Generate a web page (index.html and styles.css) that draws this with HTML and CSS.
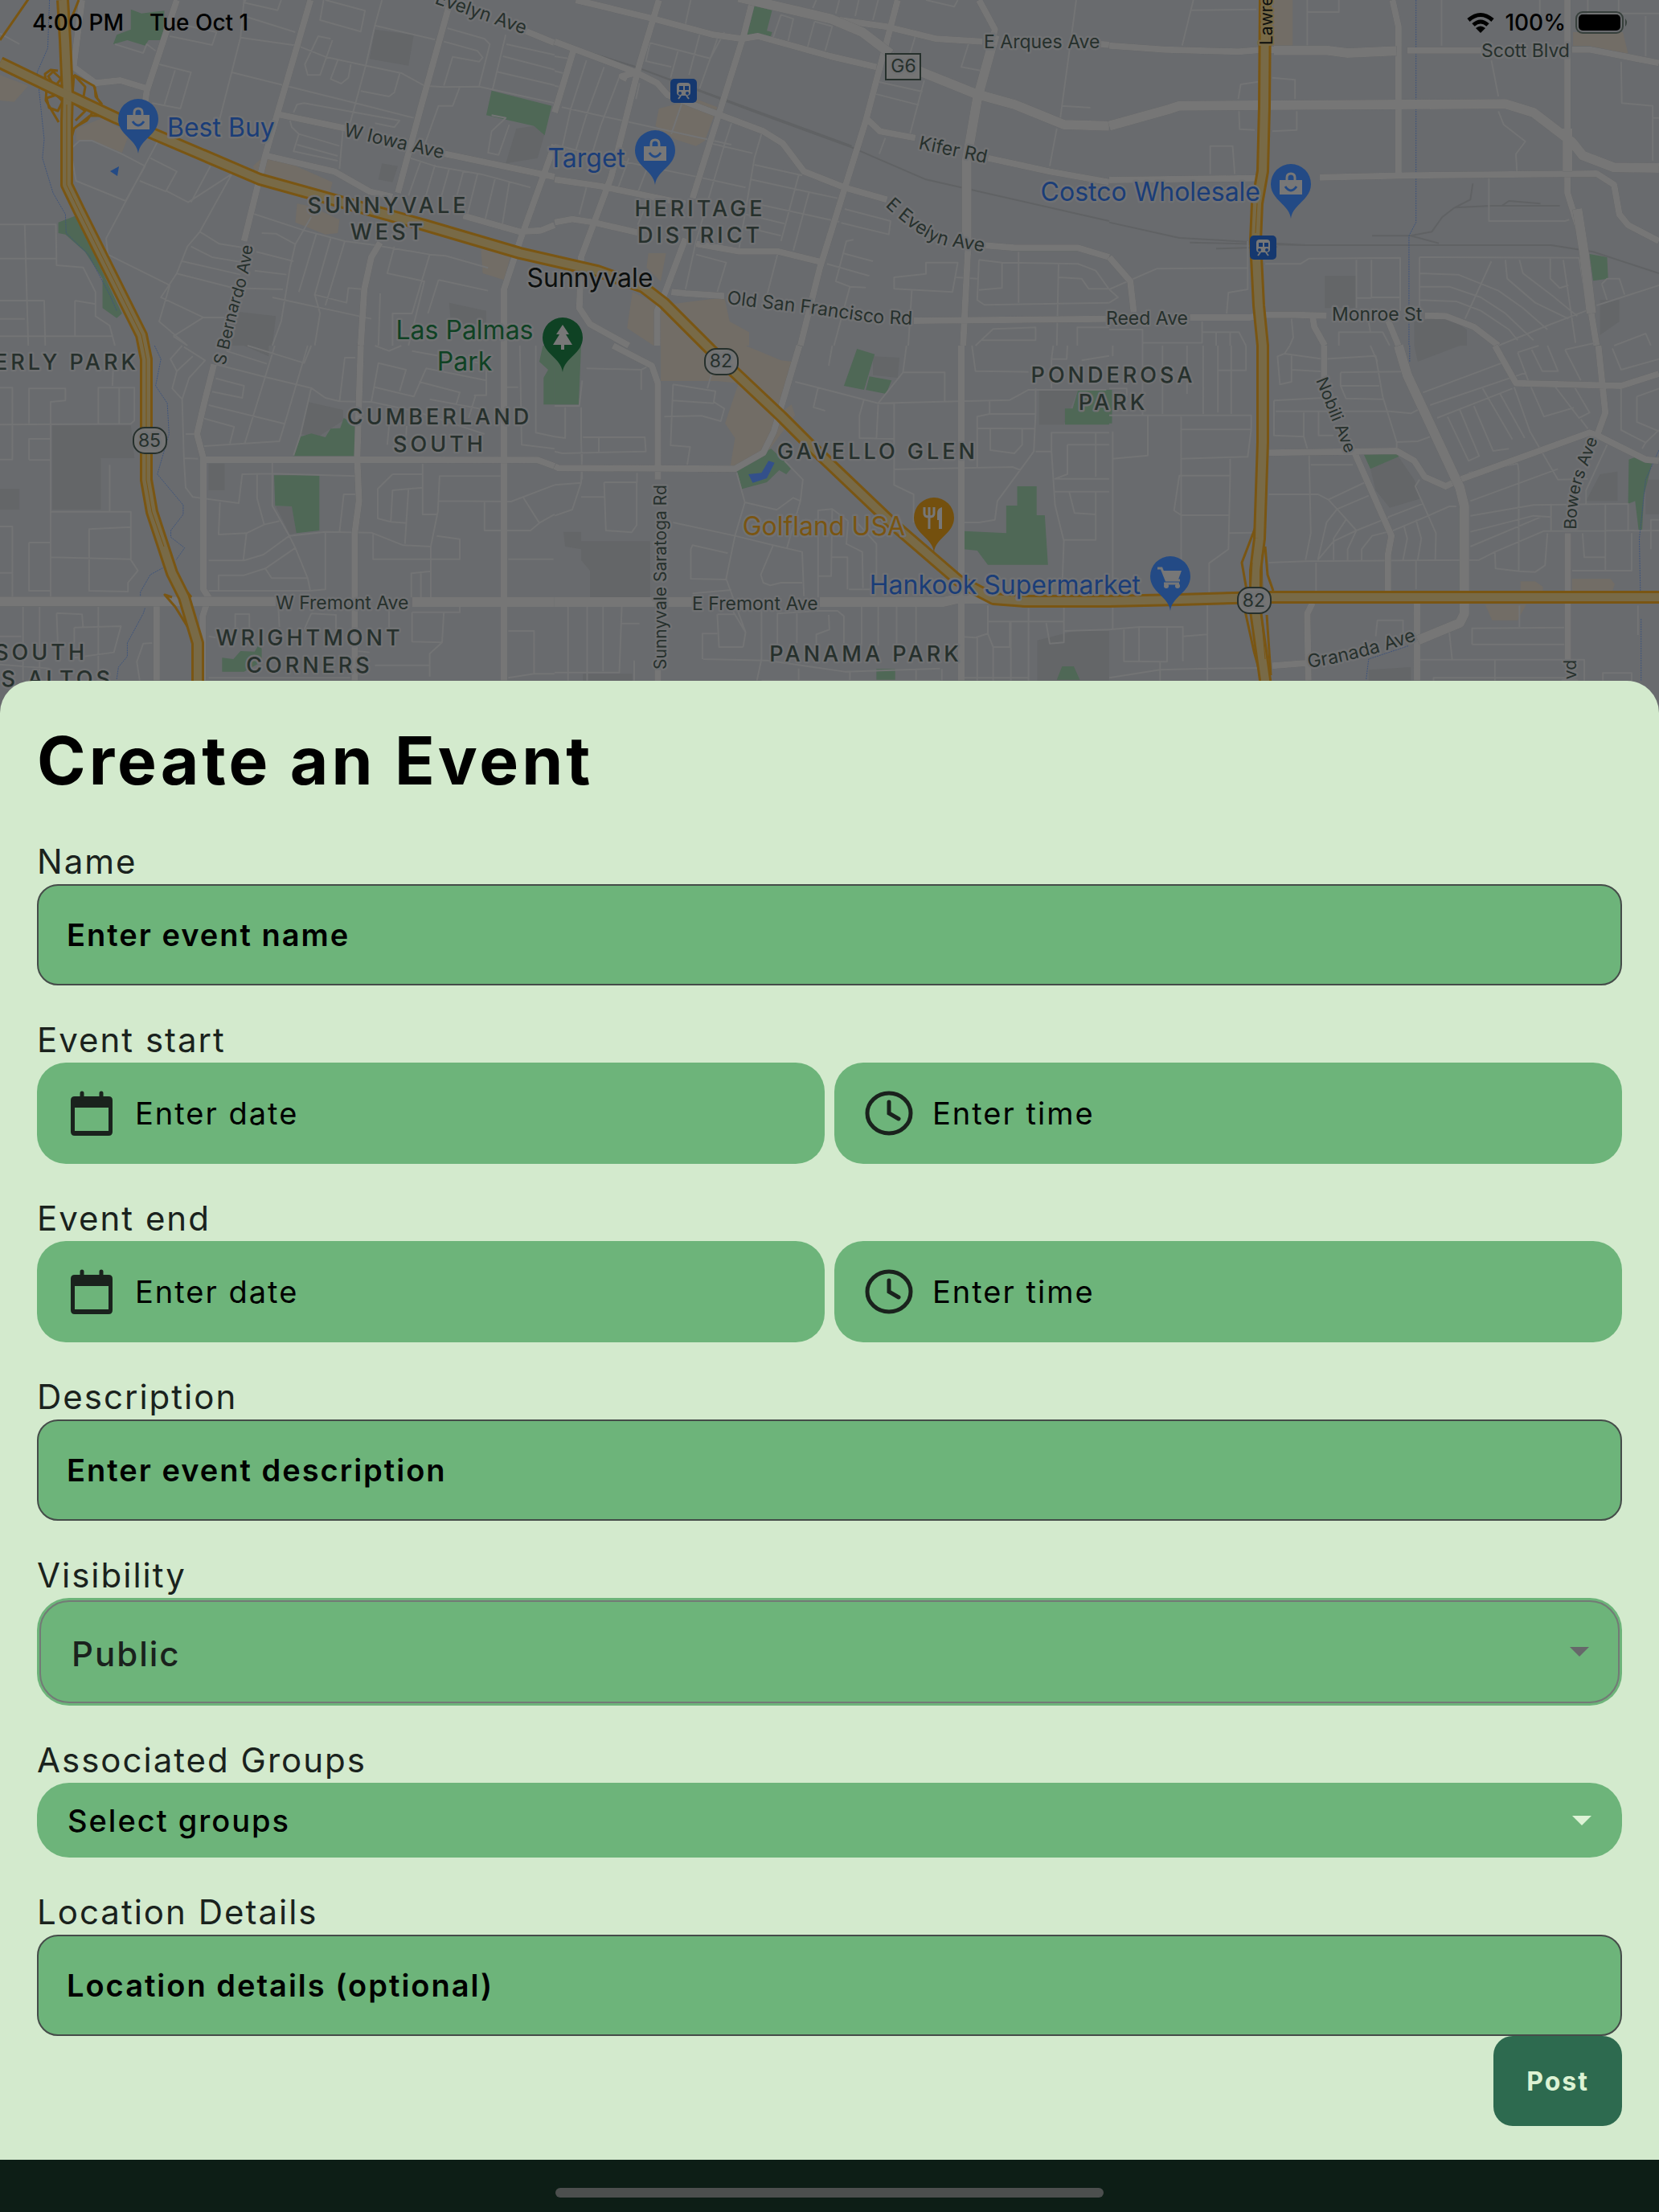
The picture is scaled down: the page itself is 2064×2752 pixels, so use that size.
FILE: index.html
```html
<!DOCTYPE html>
<html lang="en">
<head>
<meta charset="utf-8">
<meta name="viewport" content="width=device-width, initial-scale=1">
<title>Create an Event</title>
<link rel="stylesheet" href="styles.css">
</head>
<body>
<section class="map-area" aria-label="Map of Sunnyvale">
  <svg class="map" viewBox="0 0 2064 887" preserveAspectRatio="xMidYMin slice" aria-hidden="true">
    <defs>
      <path id="pin" d="M0 68C-2 50-25 45-25 25A25 25 0 0 1 25 25C25 45 2 50 0 68Z"/>
      <g id="bag"><path fill="#777" d="M-14 20H14V38H-14Z"/><path fill="none" stroke="#777" stroke-width="3" d="M-5 21V17Q-5 12 0 12Q5 12 5 17V21"/><path fill="none" stroke="#234a85" stroke-width="3" d="M-7 28Q0 38 7 28"/></g>
      <g id="train"><rect width="33" height="30" rx="5" fill="#15386f"/><rect x="8" y="5" width="17" height="16" rx="4" fill="#777"/><path fill="#15386f" d="M11 9h5v5h-5zM18 9h5v5h-5z"/><circle cx="12" cy="18" r="2" fill="#15386f"/><circle cx="21" cy="18" r="2" fill="#15386f"/><path stroke="#777" stroke-width="2" d="M13 21l-3 4M20 21l3 4"/></g>
      <path id="lbl-bernardo" d="M280 455L296 385Q314 335 316 285"/>
      <path id="lbl-eevelyn" d="M1101 256Q1150 302 1180 306T1240 317"/>
      <path id="lbl-oldsf" d="M904 378L1007 390L1090 402L1160 405"/>
      <path id="lbl-bowers" d="M1961 659Q1961 620 1970 595T1994 530"/>
      <path id="lbl-granada" d="M1628 831Q1700 820 1775 792"/>
    </defs>
    <rect width="2064" height="887" fill="#696b6e"/>

    <!-- land use, local streets and avenues, tile by tile -->
    <g transform="matrix(.44 0 0 .3333 0 0)">
      <path class="school" d="M1060 110L1170 130L1155 245L1045 220ZM1460 480L1510 470L1540 500L1520 590L1430 610ZM1080 610L1125 620L1110 680L1070 670ZM650 1160L780 1180L770 1290H640ZM1270 1130L1375 1160V1210H1275Z"/>
      <path class="shops" d="M0 280L80 320L40 380L0 375ZM215 480L290 440L365 500L345 570L260 525L215 525ZM715 620L740 590L820 610L940 680L930 735L730 670ZM840 760L880 770L960 820L955 870L920 875L835 830ZM1360 930L1445 950L1425 1045L1365 1020Z"/>
      <path class="park" d="M370 35L400 50L465 40L460 150L420 150L410 170L360 150L320 165L330 130L370 110ZM1390 338L1560 395L1540 505L1510 470L1375 430ZM165 870V830L215 805L345 1170L330 1187L290 1150V1040L240 940L185 875Z"/>
      <path class="minor" d="M480 135L600 168L612 120L490 85M440 190L415 165L405 198L325 165M0 125L55 165M695 0L690 10L785 38L795 0M915 0L905 75L1020 118L1032 40L920 0M1080 0L1060 95L1230 148M690 60L835 120M690 0L680 140L840 170L920 212L1035 245L1135 273L1200 320L1255 325L1355 323L1568 385M680 140L655 270L620 450M655 270L1005 385L1170 440M940 150L905 280L870 280L862 240L900 135L935 145M955 225L935 295L965 312L985 290L992 240M1060 95L1035 240L990 460M1130 275L1115 345L1100 360L1020 340M450 240L540 270L510 405L430 385M495 262L465 390M1265 105L1370 145L1385 165L1355 320M1255 155L1350 190L1365 215L1355 230L1280 212L1255 320M1430 130L1392 338M1432 165L1568 205M1422 210L1568 260M1405 268L1568 318M830 420L840 390L860 385L1130 450L1115 475L1060 460M820 450L825 475L845 500L960 545M845 500L830 565L955 600M840 540L955 582M970 480L960 630M1300 325L1280 395H1240L1190 580M1390 430L1430 440L1390 490L1380 570L1410 578L1440 465M1160 590L1230 620L1360 650L1500 700M1190 600L1155 730M1230 615L1200 750M1270 630L1240 770M1310 640L1280 790M1350 650L1320 810M1400 665L1370 830M1440 680L1420 840M205 550L225 525L260 525L345 575L410 620L355 750L215 675L205 600M445 530L300 890L305 950L480 1065L450 1200L530 1290M425 590L500 640L470 712L532 755L655 650L565 865L530 920L500 1020L455 1110L575 1185L635 1185M395 675L470 715M595 620L540 755M565 865L620 910L690 925M540 920L600 960L690 980M515 975L680 1025M497 1020L660 1075L800 1080M710 795L860 860L975 900L1060 915L1215 950L1260 955L1380 1000M740 870L780 872L835 912L820 1000L795 1200L770 1290M880 810L835 912M895 870L845 1090M935 890L890 1100L905 1170L890 1290M725 940L830 975M720 1010L810 1025M975 900L920 1140M1115 920L1095 1020L1200 1050L1155 1290M1215 950L1165 1170H1110V1290M1240 1045L1380 1085M1240 1045L1210 1170M1075 1095L1070 1290M1030 1080L985 1075L980 1130L890 1100M770 1110L1050 1190M0 838H158L160 990L235 998L270 1090V1180L310 1215L325 1290M70 840L80 1290M0 965H160M0 1122H125L128 1290M212 1122L270 1135M212 1122V1255M0 1255H320M490 1255L575 1185M490 1255L530 1290M0 1190H70"/>
      <path class="creek" d="M140 0L135 180L105 270L125 520L120 590L150 720L185 800L187 870L250 950L310 1100L330 1160"/>
      <path class="major" d="M232 0L208 250L270 310L340 300L415 330M500 0L415 340L410 385M878 0L750 580L690 900M1270 20L1190 400L1125 720M1075 905L1050 960L1030 1080L1020 1290M1568 540L1470 900L1425 1080L1425 1290M780 425L980 480M1250 572L1568 660M750 580L945 640L1045 715L1110 735M1310 805L1470 865L1530 860L1568 840M1485 115L1568 160"/>
    </g>
    <g transform="matrix(.44 0 0 .3333 690 0)">
      <path class="shops" d="M295 405L355 385L400 370L460 400L425 525L400 545L340 520L285 470ZM265 945L315 945L300 1050L260 1000ZM220 1090L300 1140L480 1110L495 1200L550 1240V1290H280L205 1225Z"/>
      <path class="park" d="M560 20L615 38L600 115L615 120L610 142L542 130ZM0 1190H35V1290H0Z"/>
      <path class="rail" d="M0 155L230 250L560 415L840 550L1050 670L1568 825M230 250L840 545"/>
      <path class="minor" d="M385 0L370 90M740 0L730 30M805 0L795 50M860 0L850 60M915 0L900 75M1050 0L1130 25L1140 0M1475 0L1430 440M1435 395L1515 402M270 160L440 218L480 120M270 160L258 228L330 250M350 185L328 290M410 130L380 280M460 145L410 330M640 55L675 70L660 155M640 55L618 140M735 80L785 98L765 190M735 80L715 178M1170 165L1150 250L1210 265M1020 135L1005 200M915 305L1040 342M905 350L1030 392M1045 300L1005 500M935 515L918 575M1420 480L1400 620M0 210L45 220M0 265L40 278M0 320L30 328M90 225L45 410L20 560M140 250L90 430L60 560M185 280L130 470L100 600M20 400L500 540M0 540L150 590L420 665L540 700M360 385L330 500M500 460L480 540L400 900M585 500L565 590L520 940M440 535L560 572M565 615L700 655M555 670L800 740M690 655L640 900M720 715L675 935M550 755L805 828M540 800L650 835M530 845L640 880M820 780L950 825L945 875L810 832M90 700L70 800M270 600L235 720M210 590L180 700M235 840L260 760M845 895L825 900L795 1050L835 1070L880 1073M815 945L900 975M770 985L890 1030M400 950L485 980L460 1090M400 900L370 1080M630 950L600 1105M835 1070L790 1290M1050 980H1140L1125 1090L960 1078V1035L1050 1022ZM1135 1035L1195 1040M1010 1085L1000 1290M1200 970L1265 980L1480 985L1530 1010L1568 1080M1265 980V1075L1200 1082M1200 970L1195 1120L1215 1138L1568 1130M1312 940V1130M1425 985L1420 1290M1425 1035L1490 1040L1510 1078H1568M1190 1290L1240 1228L1360 1222V1270H1210M1478 1290V1222H1568M240 310L230 370"/>
      <path class="major" d="M60 0L280 70L450 130L530 145L575 135L780 210L910 250M295 0L240 240L160 660L75 960L70 1150L100 1210L210 1290M0 155L230 270L290 310L320 355L430 410L590 490L645 535L705 640L820 700L940 745M560 0L535 130L390 740M370 890L310 1100L290 1160V1290M970 0L880 450L750 1000L695 1290M780 70L940 100L1080 145L1210 155M1545 165L1568 167M1200 0L1245 110L1195 370L1165 600L1170 900L1155 1290M880 440L920 490L1020 515M1225 590L1400 640L1568 680M1210 915L1300 925H1480L1568 960M0 670L130 695L370 760M0 830L50 818L110 830L240 870M400 910L520 938H630L760 980M330 1090L370 1095L480 1105M1015 1197L1568 1190M55 180L0 420M235 270L190 285L205 295"/>
      <path class="major wide" d="M520 -10L780 70L870 120L950 200M950 210L1040 270L1190 350L1300 390L1440 465L1568 470M1245 130L1195 370L1165 600L1165 900"/>
    </g>
    <g transform="matrix(.4362 0 0 .3333 1380 0)">
      <path class="school" d="M615 1030H705V1150H615ZM870 1200L960 1180L1020 1230V1290H870ZM1400 1120H1455V1200L1400 1250Z"/>
      <path class="shops" d="M470 0H523V170H470ZM1323 120H1465L1480 200L1370 172H1323Z"/>
      <path class="park" d="M1370 948L1420 960L1423 1040L1380 1048Z"/>
      <path class="rail" d="M0 830L200 888L560 915L1260 915L1380 940L1568 1020M230 905L560 915M750 880H860L940 908M860 880L920 865L950 810L985 775L1030 745L1037 685M985 775L1090 768H1285M1120 768L1140 750L1230 760M305 928L480 922"/>
      <path class="minor" d="M240 0L208 170M235 38L420 35M565 0V170M565 45H655V0M948 0V170M1228 0V60M1365 0V50H1568M1453 0V60M1530 60V210M1460 230L1462 385L1550 395V600M1550 440H1568M1090 225L1110 360M465 290L530 298V370M425 305L375 315L368 370M535 415V485L465 490M370 415L372 482L415 485M288 650V545H352L358 650M1110 415L1125 465L1187 528L1160 575L1163 640M1083 665V825H1300L1312 820M0 1080L135 1003L395 1000M445 985H545L570 965L830 962V1160M705 970V1150M748 970V1110H830M705 1112H748M395 900V1080L340 1092L335 1170M885 960L1340 962L1365 1160M885 960V1160M885 1020L995 1025L1110 1085L1180 1150L1250 1230M885 1070L970 1070L1060 1110L1130 1170L1210 1270M885 1120L990 1125L1060 1160L1140 1230L1165 1270M1090 975L1015 1190M1130 970L1135 1040L1215 1130L1310 1190M1170 970L1180 1020L1265 1105L1335 1180M1258 965V1040L1285 1075L1310 1065M1295 970L1330 1280M1110 1290L1250 1215L1360 1160M1390 1140L1568 1065M1405 1060L1420 1040H1455L1470 1100M1405 1060L1420 1120M1440 1290L1530 1245L1545 1290M0 1080L25 1110L0 1130M0 1230H95V1290M95 1280H265V1200M265 1240H370L390 1290M305 1240V1290M345 1240V1290M520 1190L525 1260L515 1290M655 1290V1240H780L800 1290M740 1200L745 1240"/>
      <path class="creek" d="M875 0V830L855 880V1290"/>
      <path class="major" d="M0 170L160 185L370 193L440 185L640 188M850 188L1062 188M1320 185H1370L1568 235M0 672L420 665M600 662L850 655L1390 648L1440 690L1455 800L1480 840L1568 900M808 0L825 100V655M1307 0V720L1350 900L1375 1170L1390 1290M230 1185H400L440 1175H530L620 1178M900 1178L960 1180L1040 1220L1110 1290M0 960L60 1050L70 1165M580 1180L585 1220L615 1290M795 1195L825 1290"/>
      <path class="major wide" d="M470 188L620 188L680 198L820 190M0 470L170 408L200 395L1130 388L1210 420L1320 530L1350 580L1440 625L1568 627M1307 480L1307 640M1335 780L1355 950L1375 1170"/>
    </g>
    <g transform="matrix(.44 0 0 .3333 0 430)">
      <path class="school" d="M148 298L370 298L380 420H285V612H148ZM0 535H55V612H0ZM590 440H635V540H590ZM870 210L970 240V280L900 340L850 330ZM780 600L825 600L838 700L820 705ZM690 0H760V40Z"/>
      <path class="park" d="M830 412L850 340L880 328L920 342L935 310L962 308L972 270L1005 295V412ZM775 484H903V690L838 700L825 600L778 598ZM628 1165L660 1170L680 1140L720 1142L730 1120L740 1130V1180L690 1217H628ZM1535 0H1568V220H1537V120L1550 90L1525 60Z"/>
      <path class="minor" d="M0 157H35V425H0M82 427V348H143V427H82M82 290V160H185V205L143 210V940M0 295L370 292L380 280V157H278V290M337 157V290M320 80L318 150M310 445V618M143 620H370V800L390 840L362 885V918L252 915V685L370 677M0 675H35V940M0 848H35M143 790L370 797M82 735H143M82 735V915H143M65 975V1250M112 975V1250M0 1085H60M160 998L232 1003L235 1050M160 998L165 1160M210 1052L342 1047L322 1145L210 1165V1052M278 975V1250M430 1110L405 1112L387 1180L395 1250M515 0L482 50L500 95L545 40M520 5L580 55L535 120L515 200L520 420L525 530L545 565L675 588L685 480L770 478L1005 487M525 330H555M520 420L560 422M500 95L487 160L515 200M610 70L752 118L880 158L920 195L960 208L1050 210L1175 245L1370 330M610 122L690 150L685 195L600 172M590 222L805 292L870 0M577 272L662 303L650 365M577 375L790 357L805 292M777 0L692 365M700 0L860 65L880 0M640 20L755 68M880 158L850 330L830 410M960 208L975 45H1005M1050 210L1070 65L1148 90L1130 170M1060 155L1170 190L1205 85L1375 130M1185 135L1300 175L1290 220M1215 200L1375 240M1345 185L1325 270M1060 0L1100 20L1135 0M1165 20L1375 70V185L1340 185M1100 300L1095 370M1150 300L1145 400M770 435V478V598L818 710L835 755L870 868L877 912M727 480V570L747 668L697 700L618 705L622 585M697 700L688 800M747 668L790 655M590 802H690L745 780L818 710L920 695L1050 698L1140 745L1218 750L1238 620L1243 487H1415M835 755L750 832L690 857H618V912M750 832L768 868H870M590 915H877L920 910V698M1005 555H972L960 695M1195 440V630H1238M1110 480L1068 535V645L1105 658L1150 662M1110 480H1195M1105 658L1110 540L1195 530M1155 535L1145 740M1055 700V797H1300V722L1235 710M1218 750V940M1163 940V850L1218 842M1190 850V940M1240 580L1445 582L1568 520M1480 568L1525 662L1568 630M1370 585V690H1500L1525 662M1437 797H1565M1430 155H1465M1470 0L1475 370L1568 385M1515 0V325L1568 340M665 1060V1002H705V1060M787 975L790 1050M880 1000L950 1005V1060M880 1000L860 1060M1165 995H1300V975M1255 995L1250 1108L1215 1150V1235M1165 995V1105L1250 1108M1100 975V1060M1060 1193H1215M1437 1065H1510V1225H1568M1437 1240L1510 1225M590 1085L610 1090M1010 1140L1045 1145M0 1190L140 1205M590 1240H990"/>
      <path class="creek" d="M437 0L455 50L440 150L473 215L478 330L445 480L518 595V630L483 690V715L522 755L498 800M460 830L425 855L397 920V940M410 980L405 1000L360 1110V1160L335 1200L330 1245"/>
      <path class="major" d="M605 70L580 200L557 330L575 420V910L590 940L573 1010V1250M1020 0L1010 420L1015 580L1003 700V1250M1425 0V1250M575 425L1520 427L1568 450M443 970V1250"/>
      <path class="major wide" d="M0 955H780M1165 957H1568"/>
    </g>
    <g transform="matrix(.44 0 0 .3333 690 430)">
      <path class="school" d="M900 40L975 45L970 120L900 110ZM25 695H75V730H270V940H100V840L75 800V760L30 750ZM1370 165H1480L1440 295H1370ZM1365 1100L1470 1065H1568V1250H1365ZM80 1225H220V1250H80Z"/>
      <path class="shops" d="M300 0H540L640 55L672 60L640 250L670 220L680 260L600 400L510 450H497L510 345L482 290L520 140L460 132H300Z"/>
      <path class="park" d="M0 0H75L68 220H0ZM855 12L905 32L875 165L818 150ZM890 115L953 130L937 180L880 165ZM515 465L590 400L612 385L650 430L668 460L655 480L635 465L600 510L530 535ZM1157 692L1277 700V597H1308V525H1363V633H1386L1395 818H1225L1195 765L1157 760ZM1480 165H1568V295H1443V235H1465ZM910 1207H963V1248H910ZM1435 1197H1468L1485 1247H1420Z"/>
      <path class="water" d="M548 480L585 475L605 430L622 437L600 495L560 512Z"/>
      <path class="minor" d="M90 85L245 90V165M245 90L260 80M0 225H70L78 130M30 230V345L0 340M75 230V345L78 500M80 342H255L258 395L22 402L0 395M125 345V398M335 145L455 170L450 210L480 235L470 282L415 262L310 265M335 145L328 372L383 378L375 445M335 205L450 215M445 100L432 160M775 75L785 0M680 135L745 157L915 215L1140 208L1287 203L1340 165H1560M745 157L732 230L765 243M915 215L985 100H1103V208M985 100L995 0M875 200L862 260V345L960 348M915 220L910 345M960 215V520L1015 555V660M1180 0L1190 95L1340 98M1410 0L1405 50H1448L1450 0M1405 50V160M1490 55L1568 38M1230 205V255H1360V160M1230 255L1195 265V455M1360 255L1355 395L1252 580L1245 650L1200 660H1157M1195 308L1360 310M1232 310V390L1300 402L1322 370V310M1360 395H1405V325H1568M1405 395L1415 595L1440 730L1435 900M1450 370H1568M1450 370V480L1415 497H1568M1415 545H1568M1530 325V490M1455 545L1470 625L1530 630V545M1440 725H1530V630M960 462L1295 453L1318 465M515 475L538 585L510 710L485 870L540 1070L533 1125M650 430L702 500L695 580L657 755M538 585L628 613L675 568L695 580M0 520L75 512L78 400M0 635L50 612L75 512M75 565H140M140 510H233V475M140 510L145 690L218 697L232 670V510M335 660L510 710L618 745L700 770L705 935M385 760L390 745L490 775M385 760V870L485 873M618 745L583 855L590 885L610 895L640 885H700M745 940V615L785 610L830 655M785 610L782 860H745M785 790H828V910M830 655L825 740L870 770L872 905M855 660L910 740V905M832 910H895M390 925L500 912M540 1070L490 960M460 1003H510M460 1003L465 1125H533M418 1170V1075H460M420 1170L600 1175L820 1217L1090 1205M630 1115V1000L750 990H800L818 1010V1110M585 975V1170L572 1250M685 1000V1110M775 1005L777 1060L740 1078V1115M868 975V1120M915 975V1120M967 975V1120M1022 975V1120M690 1205V1250M835 1215V1250M1022 1205V1250M1095 1207V1250M585 1250H1090M38 975V1250M92 975V1250M137 975V1215M190 975L183 1220H0M190 1037H240M225 1175V1250M1225 970V1075L1190 1090L1155 1087M1195 1090V1250M1225 1075L1240 1125H1287V1030M1240 1125V1250M1225 1030H1440V970M1440 1065L1568 1060M1340 980V1250M1290 1030V1250M1390 1035L1400 1112L1440 1108V1030M1157 1240H1340"/>
      <path class="major" d="M165 0L275 75L292 140V500M292 1210V1260M0 450L10 457L510 460L590 400L620 320L692 0M1150 0V1250"/>
      <path class="major wide" d="M0 957H390M750 957H1100L1140 945H1230"/>
    </g>
    <g transform="matrix(.4362 0 0 .3333 1380 430)">
      <path class="school" d="M870 0H1000L880 60ZM745 460L825 415L870 500L890 570L800 605L760 540ZM1400 480L1450 470V580H1360ZM1530 500H1568V630H1530ZM740 1210L860 1200V1250H740Z"/>
      <path class="shops" d="M1173 880H1215L1237 900V915H1173ZM1320 870H1430L1442 890L1435 918H1320ZM1072 965H1190L1165 1025H1092Z"/>
      <path class="park" d="M0 165H8V290H0ZM725 403H825V415L745 460ZM1482 425L1510 412L1550 430L1525 560L1520 690H1510L1500 580L1480 590Z"/>
      <path class="minor" d="M10 0V40M95 0V260M152 0V255M222 0V180M268 0V255M310 0V250M348 0V255M390 0V92H308M0 260H405V313H205M205 265V950M0 160H50V190M110 262V410L10 422M10 320V1060M405 313L395 415L205 422M345 422V485H200L185 615L205 633H340M345 485L340 760L285 812V925M340 700L410 698M470 205L610 195M470 205V335L555 340M475 245H800L860 253L880 240M555 250V340L565 385M597 245V335H640M515 0L500 30L480 40L487 145L520 135V35M500 30L610 50L760 38L780 190L820 360V390M660 100L845 97M660 100V150L675 197L780 200M660 150H770M820 360L880 357L915 340M520 90L610 97M745 0L765 60M895 175L1120 65M915 222L1190 100M935 270L1150 160M965 265L1025 430L1055 412L1000 240M1040 225L1095 393L1140 385M1065 160L1150 350M1115 180L1185 345M1155 155L1200 320L1280 500L1365 497M1200 145L1240 265L1325 232M1270 150L1340 270L1370 250L1325 150M1345 275L1365 310M1165 25L1225 0M1165 25L1195 130M1205 15L1235 95H1280L1250 0M1300 15L1385 -10M1300 15L1345 130M1435 10L1460 90L1568 50M1460 155V315L1530 362L1520 385M1505 190L1568 160M1505 190V285L1568 320M1530 362L1568 315M570 405L575 700L560 800M575 445H695M455 555H595L625 575L730 510M625 575L650 610L740 560M650 610L705 690L640 730L595 800M650 610L620 660L595 800M675 650L640 720V800M705 690L800 640M705 690L680 760V800M720 800V760L750 710L810 690L910 635L970 600H990M795 640L895 590M885 500L873 525L910 635L932 700L930 800M840 670L850 720L838 800M875 650L890 720L880 800M455 810L560 805L1055 800L1100 770L1240 692L1568 690M590 810V925M875 800V910M1030 635L1210 595L1480 590V690M1030 695L1210 635L1260 640M1030 750L1230 640M1030 580L1280 460M1025 475L1165 440M1165 440L1168 470V840M1260 590V692M1415 595V840M1420 370L1360 540V590M1350 700L1355 790H1415M1100 770L1102 832L1170 842L1215 845L1243 820L1250 700M1320 840H1490V700M1545 760V650H1568M0 1060L85 1050H210V1178M42 1060V1178L165 1180V1050M85 1050V1178M210 1085L280 1078V950M0 1240L145 1210L280 1205L440 1203M145 1180V1250M280 1080V1250M760 1085L765 1025H838V1075M1035 1115V1055L1298 1052M1035 1115H1298M970 1070L978 1170M1170 970V1050M885 1172H1355V1250M1100 1175V1250M925 1250V1240H1300M1408 1250V1222H1490V1250M1508 970V1080"/>
      <path class="creek" d="M857 0V60M1568 390L1530 500L1512 720L1515 920M1517 1020V1250M733 1245L740 1170L855 1120"/>
      <path class="major" d="M613 0V120M700 400L805 710L795 780V920M455 400L820 393L870 430L900 490L960 525L1000 500L1370 325L1400 340L1530 425L1568 430M1100 0L1160 140L1460 150L1568 105M1395 0L1415 250L1390 340M1308 700V1170M878 960V1250M580 960L565 1000L568 1250M465 1195L560 1185"/>
      <path class="major wide" d="M825 0L850 110L1000 530L1013 600V1000L1000 1035L880 1100"/>
    </g>

    <!-- expressways -->
    <path class="ramp" d="M0 50L38 -5M98 0L86 30M57 105L56 92L63 87L72 88M58 108L57 125L73 152M92 93L117 107L121 122M92 93L106 108L104 120M60 95L66 89L76 98L68 108ZM58 122L70 118L78 126L72 138L61 134ZM94 150L106 138L96 131M128 144L112 144L92 160L88 175M120 133L108 150L94 158M118 108L119 120L127 130M92 93L90 120M246 800L218 755L205 740L214 743M214 713L238 743M1552 740L1545 700L1568 640M1549 760L1560 810L1570 846M1584 735L1577 715L1574 680M1581 840L1576 765"/>
    <path class="hw-edge" d="M78 0L81 50L84 117L83 150V230L99 263L176 417L182 447V597L189 637L214 713L229 743L246 800V890"/>
    <path class="hw-edge" d="M0 78L62 108L145 147L323 223L528 280L647 315L743 337L800 357L826 377L884 435L972 518L1007 553L1112 653L1192 722L1236 745L1275 748H1380L1467 746L1572 743H2064"/>
    <path class="hw-edge" d="M1574 0L1573 133L1571 213L1564 253L1562 300L1566 380L1571 430V550L1567 670L1562 710V760L1574 846V890"/>
    <path class="hw-fill" d="M78 0L81 50L84 117L83 150V230L99 263L176 417L182 447V597L189 637L214 713L229 743L246 800V890"/>
    <path class="hw-fill" d="M0 78L62 108L145 147L323 223L528 280L647 315L743 337L800 357L826 377L884 435L972 518L1007 553L1112 653L1192 722L1236 745L1275 748H1380L1467 746L1572 743H2064"/>
    <path class="hw-fill" d="M1574 0L1573 133L1571 213L1564 253L1562 300L1566 380L1571 430V550L1567 670L1562 710V760L1574 846V890"/>
    <path class="ramp thin" d="M83 130V230L99 263L176 417L182 447V597L189 637L204 680M1564 253L1562 290M1570 690L1571 736M1569 764L1574 820M1558 700L1556 736"/>
    <path fill="#234a85" d="M137 213L148 207L146 219Z"/>

    <!-- route shields and stations -->
    <g class="shield">
      <rect x="166" y="532" width="41" height="32" rx="14"/><text x="186" y="556">85</text>
      <rect x="877" y="434" width="41" height="32" rx="14"/><text x="897" y="457">82</text>
      <rect x="1540" y="731" width="41" height="32" rx="14"/><text x="1560" y="755">82</text>
      <rect x="1102" y="67" width="43" height="32"/><text x="1124" y="90">G6</text>
    </g>
    <use href="#train" x="834" y="98"/>
    <use href="#train" x="1555" y="293"/>

    <!-- place pins -->
    <g fill="#234a85">
      <g transform="translate(172 123)"><use href="#pin"/><use href="#bag"/></g>
      <g transform="translate(815 162)"><use href="#pin"/><use href="#bag"/></g>
      <g transform="translate(1606 204)"><use href="#pin"/><use href="#bag"/></g>
      <g transform="translate(1456 692)"><use href="#pin"/><path d="M-16 15H-11L-5 30H12M-8 34H11" fill="none" stroke="#777" stroke-width="3"/><path d="M-10 18H14L10 29H-5Z" fill="#777"/><circle cx="-5" cy="37" r="3" fill="#777"/><circle cx="9" cy="37" r="3" fill="#777"/></g>
    </g>
    <g transform="translate(700 395)"><use href="#pin" fill="#0f4224"/><path fill="#777" d="M0 9L8 21H4L12 34H2V40H-2V34H-12L-4 21H-8Z"/></g>
    <g transform="translate(1162 619)"><use href="#pin" fill="#74500e"/><path fill="none" stroke="#777" stroke-width="3" d="M-12 12V20Q-12 24 -6 24Q0 24 0 20V12M-6 12V39"/><path fill="#777" d="M4 20Q4 13 10 12V39H6V28H4Z"/></g>

    <!-- labels -->
    <g class="area">
      <text x="483" y="265">SUNNYVALE</text><text x="483" y="298">WEST</text>
      <text x="871" y="269">HERITAGE</text><text x="871" y="302">DISTRICT</text>
      <text x="547" y="528">CUMBERLAND</text><text x="547" y="562">SOUTH</text>
      <text x="1385" y="476">PONDEROSA</text><text x="1385" y="510">PARK</text>
      <text x="1092" y="571">GAVELLO GLEN</text><text x="1077" y="823">PANAMA PARK</text>
      <text x="385" y="803">WRIGHTMONT</text><text x="385" y="837">CORNERS</text>
      <g class="to-end"><text x="173" y="460">ERLY PARK</text><text x="109" y="821">SOUTH</text><text x="141" y="854">S ALTOS</text></g>
    </g>
    <g class="street">
      <text transform="translate(540 4) rotate(19)">Evelyn Ave</text>
      <text transform="translate(427 169) rotate(13)">W Iowa Ave</text>
      <text x="1224" y="60">E Arques Ave</text><text x="1843" y="71">Scott Blvd</text>
      <text x="1657" y="399">Monroe St</text><text x="1376" y="404">Reed Ave</text>
      <text transform="translate(1142 185) rotate(12)">Kifer Rd</text>
      <text x="343" y="758">W Fremont Ave</text><text x="861" y="759">E Fremont Ave</text>
      <text><textPath href="#lbl-eevelyn">E Evelyn Ave</textPath></text>
      <text><textPath href="#lbl-oldsf">Old San Francisco Rd</textPath></text>
      <text><textPath href="#lbl-granada">Granada Ave</textPath></text>
      <g class="upright">
        <text transform="translate(829 833) rotate(-90)">Sunnyvale Saratoga Rd</text>
        <text transform="translate(1637 473) rotate(68)">Nobili Ave</text>
        <text transform="translate(1961 821) rotate(-90)" text-anchor="end">Blvd</text>
        <text class="on-highway" transform="translate(1583 56) rotate(-90)">Lawrence Expy</text>
        <text><textPath href="#lbl-bernardo">S Bernardo Ave</textPath></text>
        <text><textPath href="#lbl-bowers">Bowers Ave</textPath></text>
      </g>
    </g>
    <g class="place">
      <text x="208" y="170">Best Buy</text>
      <g class="to-end"><text x="778" y="208">Target</text><text x="1568" y="250">Costco Wholesale</text><text x="1419" y="739">Hankook Supermarket</text><text class="food" x="1126" y="666">Golfland USA</text></g>
      <g class="to-middle"><text class="green" x="578" y="422">Las Palmas</text><text class="green" x="578" y="461">Park</text><text class="city" x="734" y="357">Sunnyvale</text></g>
    </g>
  </svg>
  <div class="status">
    <div class="status-group"><span>4:00 PM</span><span>Tue Oct 1</span></div>
    <div class="status-group status-right">
      <svg width="36" height="26" viewBox="0 0 36 26" aria-hidden="true"><path d="M3 10Q18 -3 33 10" fill="none" stroke="#000" stroke-width="5"/><path d="M9 16Q18 8 27 16" fill="none" stroke="#000" stroke-width="5"/><path d="M12 20Q18 15 24 20L18 26Z"/></svg>
      <span>100%</span>
      <svg width="66" height="28" viewBox="0 0 66 28" aria-hidden="true"><rect x="1" y="1" width="58" height="26" rx="8" fill="none" stroke="#37403c" stroke-width="2"/><rect x="4" y="4" width="52" height="20" rx="5"/><path fill="#37403c" d="M62 9Q66 14 62 19Z"/></svg>
    </div>
  </div>
</section>

<main class="sheet">
  <h1>Create an Event</h1>
  <form>
    <div class="field">
      <label for="name">Name</label>
      <input class="text-box" id="name" type="text" placeholder="Enter event name">
    </div>
    <fieldset class="field">
      <legend>Event start</legend>
      <div class="pair">
        <button class="picker" type="button"><svg viewBox="0 0 60 56" aria-hidden="true"><path fill-rule="evenodd" d="M9 7H51Q56 7 56 12V51Q56 56 51 56H9Q4 56 4 51V12Q4 7 9 7ZM9 21V50H51V21Z"/><path d="M18 3V10M42 3V10" stroke="#1a221d" stroke-width="5" stroke-linecap="round"/></svg>Enter date</button>
        <button class="picker" type="button"><svg viewBox="0 0 60 56" aria-hidden="true"><ellipse cx="30" cy="28" rx="27" ry="25" fill="none" stroke="#1a221d" stroke-width="5"/><path d="M30 14V28L42 35" fill="none" stroke="#1a221d" stroke-width="5" stroke-linecap="round"/></svg>Enter time</button>
      </div>
    </fieldset>
    <fieldset class="field">
      <legend>Event end</legend>
      <div class="pair">
        <button class="picker" type="button"><svg viewBox="0 0 60 56" aria-hidden="true"><path fill-rule="evenodd" d="M9 7H51Q56 7 56 12V51Q56 56 51 56H9Q4 56 4 51V12Q4 7 9 7ZM9 21V50H51V21Z"/><path d="M18 3V10M42 3V10" stroke="#1a221d" stroke-width="5" stroke-linecap="round"/></svg>Enter date</button>
        <button class="picker" type="button"><svg viewBox="0 0 60 56" aria-hidden="true"><ellipse cx="30" cy="28" rx="27" ry="25" fill="none" stroke="#1a221d" stroke-width="5"/><path d="M30 14V28L42 35" fill="none" stroke="#1a221d" stroke-width="5" stroke-linecap="round"/></svg>Enter time</button>
      </div>
    </fieldset>
    <div class="field">
      <label for="description">Description</label>
      <input class="text-box" id="description" type="text" placeholder="Enter event description">
    </div>
    <div class="field">
      <label for="visibility">Visibility</label>
      <div class="choice choice-outlined">
        <select id="visibility"><option>Public</option></select>
        <svg width="24" height="12" viewBox="0 0 24 12" aria-hidden="true"><path d="M0 0H24L12 12Z"/></svg>
      </div>
    </div>
    <div class="field">
      <label for="groups">Associated Groups</label>
      <div class="choice choice-groups">
        <select id="groups"><option>Select groups</option></select>
        <svg width="24" height="12" viewBox="0 0 24 12" aria-hidden="true"><path d="M0 0H24L12 12Z"/></svg>
      </div>
    </div>
    <div class="field field-last">
      <label for="location">Location Details</label>
      <input class="text-box" id="location" type="text" placeholder="Location details (optional)">
    </div>
    <button class="post" type="submit">Post</button>
  </form>
</main>
<footer class="home-bar"><div class="home-indicator"></div></footer>
</body>
</html>
```
FILE: styles.css
```css
* {
  box-sizing: border-box;
}

body {
  margin: 0;
  min-height: 100vh;
  display: flex;
  flex-direction: column;
  background: #0d1e16;
  color: #000;
  font-family: Inter, "Liberation Sans", sans-serif;
}

/* map behind the sheet */
.map-area {
  position: relative;
  flex: 1 0 auto;
  min-height: 320px;
}

.map {
  position: absolute;
  inset: 0;
  width: 100%;
  height: calc(100% + 40px);
  background: #696b6e;
}

.map path {
  vector-effect: non-scaling-stroke;
}

.minor, .major, .rail, .creek, .ramp, .hw-edge, .hw-fill {
  fill: none;
  stroke-linejoin: round;
}

.minor { stroke: #737475; stroke-width: 2; }
.rail { stroke: #606264; stroke-width: 2; }
.creek { stroke: #40557b; stroke-width: 1; stroke-dasharray: 2 1; }
.major { stroke: #767676; stroke-width: 8; filter: drop-shadow(0 0 1px #5c5e60); }
.wide { stroke-width: 12; }
.ramp { stroke: #7a5613; stroke-width: 3; }
.thin { stroke-width: 1; }
.hw-edge { stroke: #7a5613; stroke-width: 16; }
.hw-fill { stroke: #786a47; stroke-width: 10; }
.park { fill: #4f6856; }
.shops { fill: #726d66; }
.school { fill: #646668; }
.water { fill: #33508a; }

.map text {
  paint-order: stroke;
  stroke: #707173;
  stroke-width: 5px;
  stroke-linejoin: round;
}

.area { font-size: 27px; font-weight: 500; letter-spacing: 4px; text-anchor: middle; fill: #26302c; }
.street { font-size: 23px; fill: #26302c; }
.upright { font-size: 21px; }
.place { font-size: 32px; fill: #1a3d78; }
.to-end { text-anchor: end; }
.to-middle { text-anchor: middle; }
.food { fill: #7a5511; }
.green { fill: #0f4224; }
.city { fill: #0c0f0e; }
.map .on-highway { stroke: #786a47; fill: #0c0f0e; }
.shield { font-size: 23px; text-anchor: middle; fill: #26302c; }
.shield rect { fill: #747474; stroke: #26302c; stroke-width: 2; }

.status {
  position: relative;
  display: flex;
  justify-content: space-between;
  align-items: center;
  padding: 12px 38px 0 40px;
  font-size: 28px;
  line-height: 32px;
  font-weight: 500;
}

.status-group {
  display: flex;
  align-items: center;
  gap: 32px;
}

.status-right {
  gap: 12px;
}

/* form sheet */
.sheet {
  position: relative;
  padding: 52px 46px 42px;
  border-radius: 40px 40px 0 0;
  background: #d3eacd;
}

h1 {
  margin: 0 0 49px;
  font-size: 82px;
  line-height: 96px;
  font-weight: 700;
  letter-spacing: 4px;
}

form {
  display: flex;
  flex-direction: column;
}

.field {
  display: flex;
  flex-direction: column;
  margin: 0 0 40px;
  padding: 0;
  border: 0;
  min-width: 0;
}

.field-last {
  margin-bottom: 0;
}

label, legend {
  padding: 0;
  font-size: 42px;
  line-height: 56px;
  letter-spacing: 2px;
  color: #1a221d;
}

input, select, button {
  font: inherit;
  font-size: 38px;
  letter-spacing: 2px;
  color: #000;
}

.text-box {
  height: 126px;
  padding: 0 35px;
  border: 2px solid #454c49;
  border-radius: 26px;
  background: #6db47a;
  font-weight: 600;
}

.text-box::placeholder {
  color: #000;
  opacity: 1;
}

.pair {
  display: grid;
  grid-template-columns: 1fr 1fr;
  gap: 12px;
}

.picker {
  display: flex;
  align-items: center;
  gap: 24px;
  height: 126px;
  padding: 0 38px;
  border: 0;
  border-radius: 36px;
  background: #6db47a;
}

.picker svg {
  width: 60px;
  height: 56px;
  fill: #1a221d;
}

.choice {
  display: grid;
  align-items: center;
  border-radius: 40px;
  background: #6db47a;
}

.choice > * {
  grid-area: 1 / 1;
}

.choice select {
  width: 100%;
  height: 100%;
  appearance: none;
  border: 0;
  background: none;
  font-weight: 500;
}

.choice svg {
  justify-self: end;
  margin-right: 38px;
  pointer-events: none;
}

.choice-outlined {
  height: 134px;
  padding: 3px;
}

.choice-outlined select {
  padding: 4px 38px 0;
  border: 2px solid #737a76;
  border-radius: 37px;
  font-size: 42px;
  color: #1a221d;
}

.choice-outlined svg {
  fill: #66686a;
}

.choice-groups {
  height: 93px;
}

.choice-groups select {
  padding: 0 38px;
}

.choice-groups svg {
  fill: #ddf3d6;
}

.post {
  align-self: flex-end;
  height: 112px;
  padding: 0 41px;
  border: 0;
  border-radius: 24px;
  background: #2d6a4f;
  color: #dcf2d3;
  font-size: 32px;
  font-weight: 700;
}

.home-bar {
  display: flex;
  justify-content: center;
  align-items: flex-end;
  height: 65px;
  padding-bottom: 18px;
  background: #0d1e16;
}

.home-indicator {
  width: 33%;
  height: 12px;
  border-radius: 6px;
  background: #4c4f4e;
}
```
